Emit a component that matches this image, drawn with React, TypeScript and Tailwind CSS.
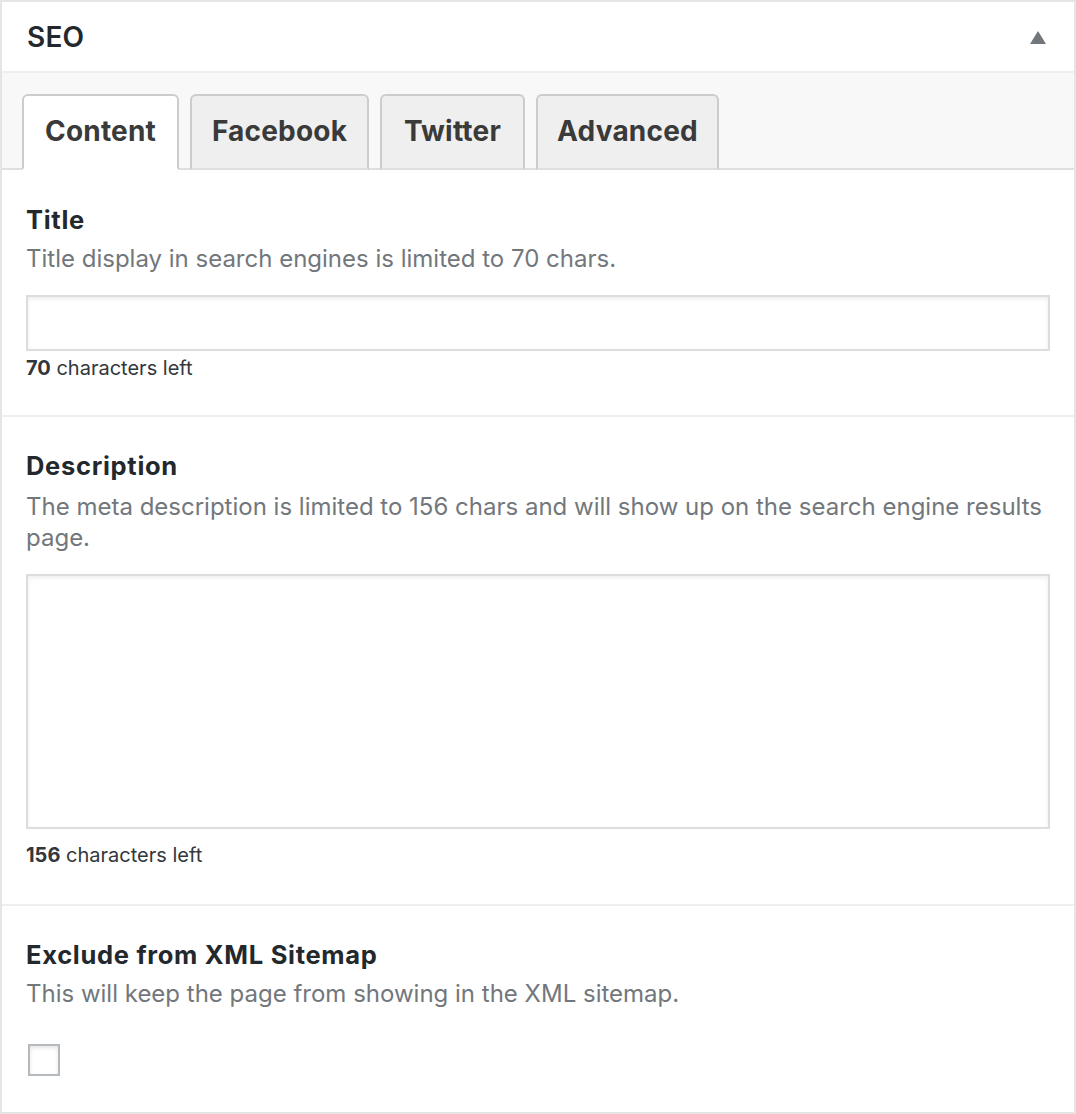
import React from "react";

const tabs = [
  { label: "Content", w: "w-[157px]", active: true },
  { label: "Facebook", w: "w-[179px]", active: false },
  { label: "Twitter", w: "w-[145px]", active: false },
  { label: "Advanced", w: "w-[183px]", active: false },
];

export default function App() {
  return (
    <div className="w-[1076px] h-[1114px] bg-white font-['Inter',sans-serif]">
      <div className="border-2 border-[#e5e5e5] bg-white">
        <div className="h-[71px] flex items-center justify-between pl-[25px] pr-[28px] border-b-2 border-[#eeeeee]">
          <h2 className="text-[28px] font-semibold text-[#23282d] tracking-[0.2px]">SEO</h2>
          <svg width="16" height="13" viewBox="0 0 16 13" className="mt-[2px]">
            <polygon points="8,0 16,13 0,13" fill="#72777c" />
          </svg>
        </div>
        <div className="bg-[#f8f8f8] pt-[21px] pl-[20px] flex gap-[11px] border-b-2 border-[#dfdfdf]">
          {tabs.map((t) => (
            <div
              key={t.label}
              className={`${t.w} h-[76px] -mb-[2px] rounded-t-[6px] border-2 border-[#cccccc] flex items-center justify-center text-[28px] font-bold tracking-[0.2px] text-[#3a3a3a] ${
                t.active ? "bg-white border-b-white" : "bg-[#efefef] border-b-[#dfdfdf]"
              }`}
            >
              <span className="pb-[2px]">{t.label}</span>
            </div>
          ))}
        </div>

        {/* Title */}
        <div className="px-[24px] pt-[32px] pb-[32px] border-b-2 border-[#eeeeee]">
          <div className="text-[25.5px] leading-[36px] font-bold tracking-[0.7px] text-[#23282d]">Title</div>
          <p className="mt-[5px] text-[24px] leading-[31px] text-[#72777c]">
            Title display in search engines is limited to 70 chars.
          </p>
          <div className="mt-[21px] h-[56px] border-2 border-[#dddddd] shadow-[inset_0_2px_4px_rgba(0,0,0,0.07)]" />
          <div className="mt-[2px] text-[20px] leading-[30px] text-[#32373c]">
            <span className="font-bold">70</span> characters left
          </div>
        </div>

        {/* Description */}
        <div className="px-[24px] pt-[31px] pb-[34px] border-b-2 border-[#eeeeee]">
          <div className="text-[25.5px] leading-[36px] font-bold tracking-[0.7px] text-[#23282d]">Description</div>
          <p className="mt-[7px] text-[24px] leading-[31px] text-[#72777c]">
            The meta description is limited to 156 chars and will show up on the search engine results page.
          </p>
          <div className="mt-[21px] h-[255px] border-2 border-[#dddddd] shadow-[inset_0_2px_4px_rgba(0,0,0,0.07)]" />
          <div className="mt-[11px] text-[20px] leading-[30px] text-[#32373c]">
            <span className="font-bold">156</span> characters left
          </div>
        </div>

        {/* Exclude */}
        <div className="px-[24px] pt-[31px] pb-[36px]">
          <div className="text-[25.5px] leading-[36px] font-bold tracking-[0.7px] text-[#23282d]">Exclude from XML Sitemap</div>
          <p className="mt-[5px] text-[24px] leading-[31px] text-[#72777c]">
            This will keep the page from showing in the XML sitemap.
          </p>
          <div className="mt-[35px] ml-[2px] w-[32px] h-[32px] border-2 border-[#b4b9be] bg-white shadow-[inset_0_2px_4px_rgba(0,0,0,0.1)]" />
        </div>
      </div>
    </div>
  );
}
